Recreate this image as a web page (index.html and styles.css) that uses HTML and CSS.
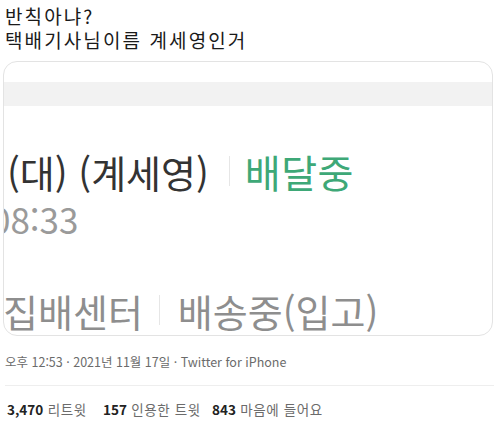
FILE: index.html
```html
<!DOCTYPE html>
<html lang="ko">
<head>
<meta charset="utf-8">
<link rel="stylesheet" href="styles.css">
</head>
<body>
<div class="tweet">
  <div class="text">
    <div>반칙아냐?</div>
    <div>택배기사님이름 계세영인거</div>
  </div>
  <div class="card">
    <div class="band-top"></div>
    <div class="band"></div>
    <div class="row row1">
      <span class="dark">(대) (계세영)</span>
      <span class="sep"></span>
      <span class="green">배달중</span>
    </div>
    <div class="row row2">08:33</div>
    <div class="row row3">
      <span>집배센터</span>
      <span class="sep"></span>
      <span>배송중(입고)</span>
    </div>
  </div>
  <div class="meta">오후 12:53 · 2021년 11월 17일 · Twitter for iPhone</div>
  <div class="stats">
    <span class="s1"><b>3,470</b> 리트윗</span>
    <span class="s2"><b>157</b> 인용한 트윗</span>
    <span class="s3"><b>843</b> 마음에 들어요</span>
  </div>
</div>
</body>
</html>
```
FILE: styles.css
```css
html, body {
  margin: 0;
  padding: 0;
  background: #ffffff;
}
body {
  width: 500px;
  height: 427px;
  overflow: hidden;
  font-family: "Noto Sans CJK KR", "Noto Sans", sans-serif;
}
.tweet {
  display: flex;
  flex-direction: column;
}
.text {
  padding: 4px 0 0 5px;
  font-size: 19px;
  line-height: 23.5px;
  letter-spacing: 2.1px;
  color: #1a1a1a;
}
.card {
  margin: 10px 0 0 3px;
  width: 490px;
  height: 275px;
  box-sizing: border-box;
  border: 1px solid #e3e3e3;
  border-radius: 14px;
  overflow: hidden;
  display: flex;
  flex-direction: column;
}
.band-top {
  height: 20px;
  flex: none;
}
.band {
  height: 24px;
  background: #f2f2f2;
  flex: none;
}
.row {
  display: flex;
  align-items: center;
  white-space: nowrap;
  flex: none;
}
.row1 {
  margin-top: 43px;
  height: 44px;
  padding-left: 3px;
  font-size: 38px;
  color: #333333;
}
.row1 .green {
  color: #3ea877;
  font-size: 39px;
  letter-spacing: 0.5px;
}
.sep {
  display: inline-block;
  width: 1px;
  height: 30px;
  background: #e6e6e6;
  margin: 0 15px 0 20px;
}
.row2 {
  margin-top: 7px;
  height: 36px;
  margin-left: -13px;
  font-size: 35px;
  color: #9a9a9a;
}
.row3 {
  margin-top: 52px;
  height: 44px;
  margin-left: -1px;
  font-size: 38px;
  color: #8e8e8e;
}
.row3 .sep {
  margin: 0 18px 0 16px;
}
.meta {
  margin: 16px 0 0 5px;
  font-size: 12.5px;
  line-height: 20px;
  color: #6b6b6b;
  padding-bottom: 13px;
  border-bottom: 1px solid #eeeeee;
  width: 489px;
}
.stats {
  margin: 13px 0 0 7px;
  font-size: 13.5px;
  line-height: 20px;
  letter-spacing: 0.6px;
  color: #6b6b6b;
  display: flex;
}
.stats .s1 {
  width: 96px;
}
.stats .s2 {
  width: 109px;
}
.stats b {
  color: #222222;
  font-weight: 700;
  letter-spacing: 0;
}
```
